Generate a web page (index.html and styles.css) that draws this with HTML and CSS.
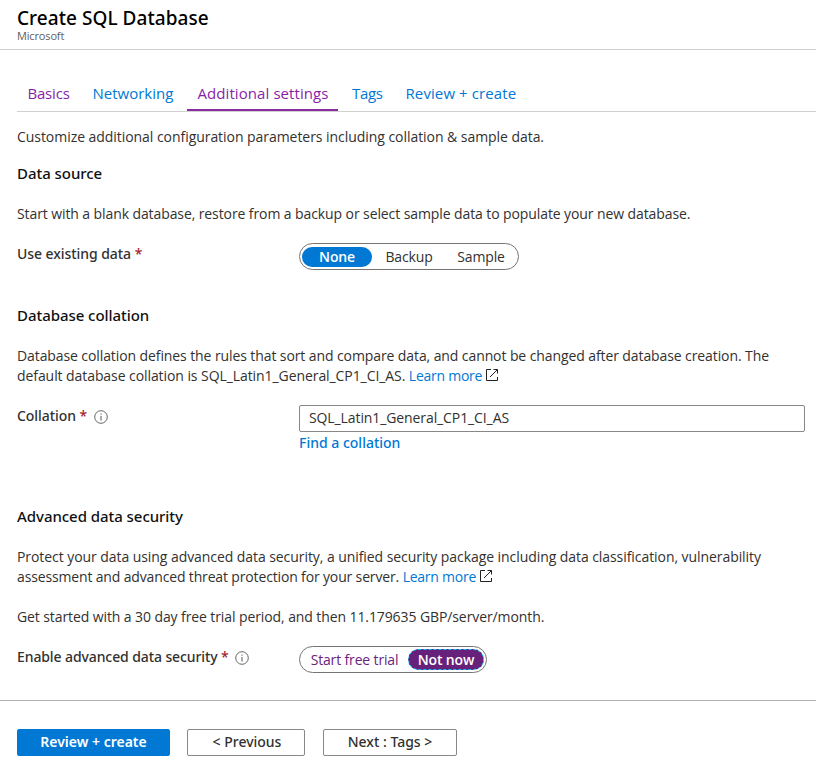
FILE: index.html
```html
<!DOCTYPE html>
<html lang="en">
<head>
<meta charset="utf-8">
<title>Create SQL Database</title>
<link rel="stylesheet" href="styles.css">
</head>
<body>
<svg class="defs" width="0" height="0">
  <symbol id="external" viewBox="0 0 13 13"><path d="M5 .5H.5v11h11V8M7.5 .5h4v4M11.5 .5L4 8" fill="none" stroke="currentColor"/></symbol>
  <symbol id="info" viewBox="0 0 14 14"><circle cx="7" cy="7" r="6.3" fill="none" stroke="currentColor" stroke-width=".9"/><path d="M7 6v4.5M7 3.5v1.2" fill="none" stroke="currentColor"/></symbol>
</svg>
<header class="header">
  <h1 class="title">Create SQL Database</h1>
  <div class="publisher">Microsoft</div>
</header>
<nav class="tabs">
  <a class="tab visited tab-basics">Basics</a>
  <a class="tab">Networking</a>
  <a class="tab visited active">Additional settings</a>
  <a class="tab tab-tags">Tags</a>
  <a class="tab tab-review">Review + create</a>
</nav>
<main class="content">
  <p class="text intro">Customize additional configuration parameters including collation &amp; sample data.</p>

  <h2 class="heading">Data source</h2>
  <p class="text">Start with a blank database, restore from a backup or select sample data to populate your new database.</p>
  <div class="row row-source">
    <div class="label">Use existing data <span class="required">*</span></div>
    <div class="pill pill-source">
      <span class="option selected">None</span>
      <span class="option">Backup</span>
      <span class="option">Sample</span>
    </div>
  </div>

  <h2 class="heading">Database collation</h2>
  <p class="text">Database collation defines the rules that sort and compare data, and cannot be changed after database creation. The<br>
  <span class="tight">default database collation is SQL_Latin1_General_CP1_CI_AS.</span> <a class="link">Learn more</a><svg class="external"><use href="#external"/></svg></p>
  <div class="row row-collation">
    <div class="label">Collation <span class="required">*</span><svg class="info"><use href="#info"/></svg></div>
    <div class="field">
      <div class="input">SQL_Latin1_General_CP1_CI_AS</div>
      <a class="find">Find a collation</a>
    </div>
  </div>

  <h2 class="heading">Advanced data security</h2>
  <p class="text security">Protect your data using advanced data security, a unified security package including data classification, vulnerability<br>
  <span class="tighter">assessment and advanced threat protection for your server.</span> <a class="link">Learn more</a><svg class="external"><use href="#external"/></svg></p>
  <p class="text">Get started with a 30 day free trial period, and then 11.179635 GBP/server/month.</p>
  <div class="row row-security">
    <div class="label label-security">Enable advanced data security <span class="required">*</span><svg class="info"><use href="#info"/></svg></div>
    <div class="pill pill-security">
      <span class="option trial">Start free trial</span>
      <span class="option chosen">Not now</span>
    </div>
  </div>
</main>
<footer class="footer">
  <button class="button primary">Review + create</button>
  <button class="button previous">&lt; Previous</button>
  <button class="button next">Next : Tags &gt;</button>
</footer>
</body>
</html>
```
FILE: styles.css
```css
* { box-sizing: border-box; }
body {
  margin: 0;
  background: #fff;
  color: #323130;
  font: 14px/20px "Open Sans", sans-serif;
  white-space: nowrap;
  overflow: hidden;
}
h1, h2, p { margin: 0; }
.defs { display: block; height: 0; }
.header { height: 50px; padding: 6px 17px 0; border-bottom: 1px solid #d2d0ce; }
.title { color: #000; font: 500 19px/24px "Noto Sans", sans-serif; letter-spacing: .05px; }
.publisher { font-size: 11px; line-height: 12px; color: #605e5c; letter-spacing: -.15px; }
.tabs { display: flex; gap: 4px; height: 36px; margin: 26px 0 0 17px; border-bottom: 1px solid #d2d0ce; font-size: 15px; line-height: 34px; }
.tab { height: 35px; width: 101px; padding: 0 0 0 10.5px; color: #0078d4; }
.tab.visited { color: #881fa8; }
.tab-basics { width: 61px; letter-spacing: -.2px; }
.tab.active { width: 151px; border-bottom: 2px solid #8a2da5; letter-spacing: .08px; }
.tab-tags { width: 50px; padding-left: 10px; letter-spacing: -.3px; }
.tab-review { width: 131px; padding-left: 9.5px; letter-spacing: .1px; }
.content { padding: 15px 0 0 17px; }
.text { margin-bottom: 20px; letter-spacing: -.096px; }
.intro { margin-bottom: 16px; letter-spacing: -.05px; }
.tight { letter-spacing: -.075px; }
.security { letter-spacing: -.066px; }
.tighter { letter-spacing: -.15px; }
.heading { margin-bottom: 21px; color: #111; font: 500 15px/20px "Noto Sans", sans-serif; letter-spacing: -.05px; }
.row { display: grid; grid-template-columns: 282px 506px; align-items: start; }
.row-source { height: 61px; }
.row-collation { height: 100px; }
.row-security { height: 53px; }
.label { font-family: "Noto Sans", sans-serif; font-weight: 500; font-size: 14px; letter-spacing: -.06px; }
.label-security { letter-spacing: -.1px; }
.required { color: #a4262c; }
.link { color: #0078d4; letter-spacing: -.25px; }
.external { width: 13px; height: 13px; margin-left: 4px; vertical-align: -1px; color: #222; }
.info { width: 14px; height: 14px; margin-left: 6px; vertical-align: -3px; color: #555; }
.row-collation .info { margin-left: 7px; vertical-align: -2.5px; }
.pill { display: flex; align-items: center; height: 27px; margin-top: -1px; border: 1px solid #767472; border-radius: 14px; }
.pill-source { width: 220px; padding-left: 2px; }
.pill-security { width: 188px; padding-left: 2px; }
.option { display: block; width: 72px; height: 20px; line-height: 20px; text-align: center; letter-spacing: -.15px; }
.option.selected { width: 70px; margin-right: 1px; border-radius: 10px; background: #0078d4; color: #fff; font-weight: 600; }
.option.trial { width: 105px; margin-right: 1px; color: #6b2380; }
.option.chosen { width: 76px; height: 21px; line-height: 19px; border: 1px dashed #18b7ee; border-radius: 11px; background: #68217a; color: #fff; font-weight: 600; }
.field { display: flex; flex-direction: column; align-items: flex-start; margin-top: -1px; }
.input { width: 506px; height: 27px; padding-left: 9px; border: 1px solid #8a8886; border-radius: 2px; line-height: 24px; letter-spacing: -.1px; }
.find { margin-top: 1px; color: #0078d4; font-family: "Noto Sans", sans-serif; font-weight: 500; }
.footer { display: flex; height: 76px; padding: 28px 17px 0; border-top: 1px solid #b3b1af; }
.button { height: 27px; padding: 0 0 2px; border: 1px solid #8a8886; border-radius: 2px; background: #fff; color: #323130; font: 500 14px/23px "Noto Sans", sans-serif; }
.primary { width: 153px; border-color: #0078d4; background: #0078d4; color: #fff; font-weight: 600; }
.previous { width: 118px; margin-left: 17px; padding-left: 2px; }
.next { width: 134px; margin-left: 18px; }
```
